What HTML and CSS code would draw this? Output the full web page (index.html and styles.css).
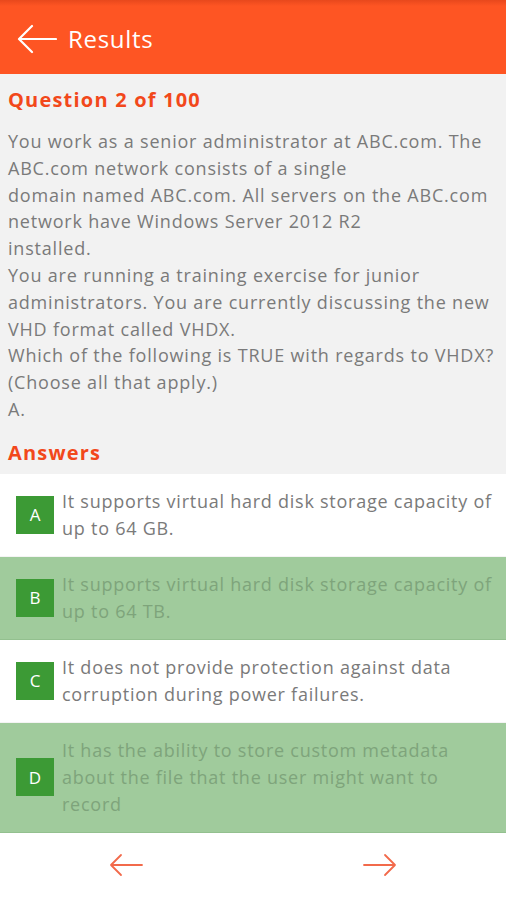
FILE: index.html
```html
<!DOCTYPE html>
<html>
<head>
<meta charset="utf-8">
<link rel="stylesheet" href="styles.css">
</head>
<body>
<div class="app">
  <header class="topbar">
    <svg class="back" width="40" height="30" viewBox="0 0 40 30"><path d="M39 15H3M15 2L2 15L15 28" fill="none" stroke="#fff" stroke-width="2.2" stroke-linecap="round" stroke-linejoin="round"/></svg>
    <span class="title">Results</span>
  </header>
  <main class="content">
    <h2 class="heading">Question 2 of 100</h2>
    <p class="question">You work as a senior administrator at ABC.com. The ABC.com network consists of a single<br>domain named ABC.com. All servers on the ABC.com network have Windows Server 2012 R2<br>installed.<br>You are running a training exercise for junior administrators. You are currently discussing the new VHD format called VHDX.<br>Which of the following is TRUE with regards to VHDX?<br>(Choose all that apply.)<br>A.</p>
    <h2 class="heading answers-heading">Answers</h2>
  </main>
  <ul class="answers">
    <li class="answer"><span class="badge">A</span><span class="atext">It supports virtual hard disk storage capacity of up to 64 GB.</span></li>
    <li class="answer correct"><span class="badge">B</span><span class="atext">It supports virtual hard disk storage capacity of up to 64 TB.</span></li>
    <li class="answer"><span class="badge">C</span><span class="atext">It does not provide protection against data corruption during power failures.</span></li>
    <li class="answer correct"><span class="badge">D</span><span class="atext">It has the ability to store custom metadata about the file that the user might want to record</span></li>
  </ul>
  <nav class="pager">
    <svg width="34" height="24" viewBox="0 0 34 24"><path d="M33 12H2M12 2L2 12L12 22" fill="none" stroke="#f26a4b" stroke-width="1.8" stroke-linecap="round" stroke-linejoin="round"/></svg>
    <svg width="34" height="24" viewBox="0 0 34 24"><path d="M1 12H32M22 2L32 12L22 22" fill="none" stroke="#f26a4b" stroke-width="1.8" stroke-linecap="round" stroke-linejoin="round"/></svg>
  </nav>
</div>
</body>
</html>
```
FILE: styles.css
```css
* { box-sizing: border-box; }
html, body { margin: 0; padding: 0; }
body {
  font-family: "Open Sans", "Noto Sans", sans-serif;
  background: #f2f2f2;
  width: 506px;
  height: 900px;
  overflow: hidden;
}
.app { display: flex; flex-direction: column; height: 900px; }
.topbar {
  height: 74px;
  background: linear-gradient(#e8481c 0, #fe5523 6px, #fe5523 100%);
  display: flex;
  align-items: center;
  padding: 4px 0 0 17px;
  gap: 11px;
  flex-shrink: 0;
}
.title { color: #fff; font-size: 24px; line-height: 30px; letter-spacing: 0.7px; }
.content { padding: 12px 8px 8px 8px; }
.heading {
  margin: 0;
  font-size: 20px;
  line-height: 27px;
  font-weight: 700;
  color: #f2481b;
  letter-spacing: 1.2px;
}
.question {
  margin: 15px 0 16px 0;
  font-size: 18px;
  line-height: 26.8px;
  color: #7a7a7a;
  letter-spacing: 0.8px;
}
.answers { list-style: none; margin: 0; padding: 0; background: #fff; }
.answer {
  display: flex;
  align-items: center;
  padding: 14px 4px 14px 16px;
  gap: 8px;
  min-height: 82px;
  border-bottom: 1px solid #f4f4f4;
}
.answer.correct {
  background: #a0cb9c;
  border-bottom: 1px solid #93c08f;
}
.badge {
  flex-shrink: 0;
  width: 38px;
  height: 38px;
  background: #3c9a35;
  color: #fff;
  font-size: 17px;
  display: flex;
  align-items: center;
  justify-content: center;
}
.atext { font-size: 18px; line-height: 27px; color: #7a7a7a; letter-spacing: 0.75px; }
.correct .atext { color: #7ea47b; }
.pager {
  flex: 1;
  background: #fff;
  display: flex;
  align-items: center;
  justify-content: space-between;
  padding: 0 109px 2px 109px;
}
```
